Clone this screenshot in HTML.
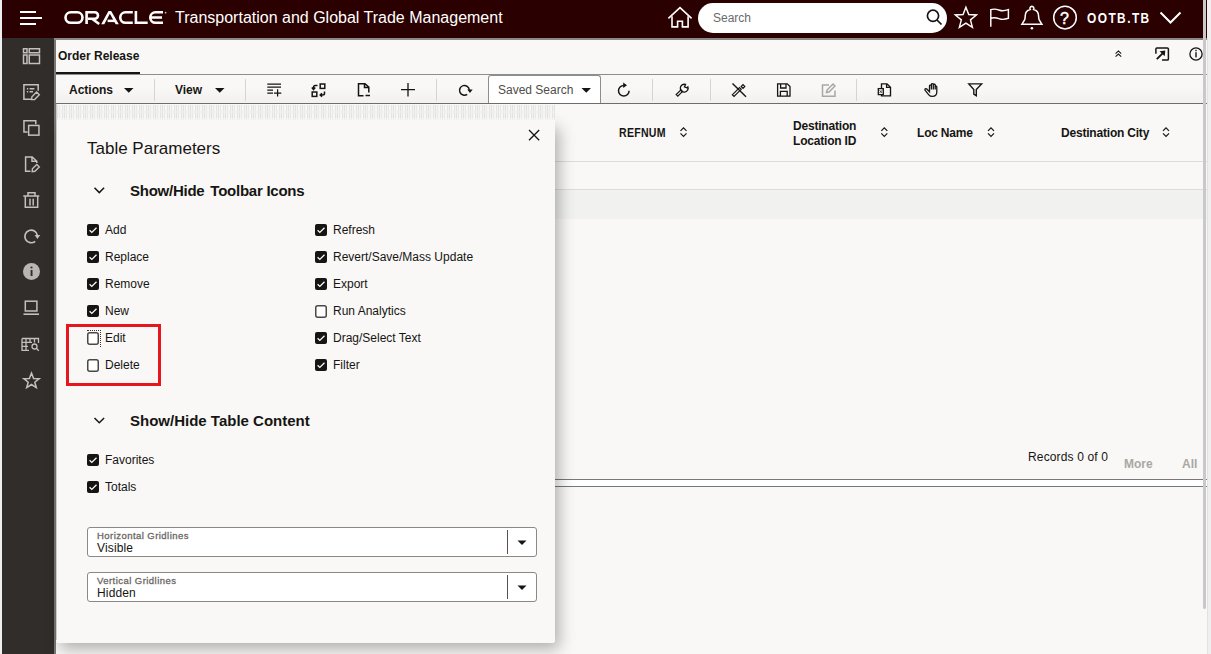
<!DOCTYPE html>
<html><head><meta charset="utf-8">
<style>
*{margin:0;padding:0;box-sizing:border-box}
html,body{width:1211px;height:654px;overflow:hidden;background:#efefef;font-family:"Liberation Sans",sans-serif;color:#161513}
.a{position:absolute}
#hdr{left:2px;top:0;width:1205px;height:38px;background:#2a0000}
#side{left:2px;top:38px;width:52px;height:616px;background:#312d2a}
#sideb{left:54px;top:38px;width:2px;height:616px;background:#7a7875}
#topb{left:54px;top:38px;width:1153px;height:2px;background:#8b8987}
#main{left:56px;top:40px;width:1151px;height:614px;background:#f9f8f6}
.t{position:absolute;white-space:nowrap;line-height:1}
svg{position:absolute;overflow:visible}
.sep{position:absolute;top:79px;width:1px;height:22px;background:#d6d4d1}
.cb{position:absolute;width:12px;height:12px;border-radius:2px;background:#161513}
.cbo{position:absolute;width:12px;height:12px;border-radius:2px;border:1.5px solid #4a4846;background:#fff}
.lbl{position:absolute;font-size:12px;white-space:nowrap;line-height:1;color:#161513}
</style></head><body>
<div class="a" id="hdr"></div>
<div class="a" id="side"></div>
<div class="a" id="sideb"></div>
<div class="a" id="topb"></div>
<div class="a" id="main"></div>


<!-- sidebar icons -->
<svg style="left:0;top:0" width="56" height="400"><g fill="none" stroke="#c4c0bb" stroke-width="1.5">
<rect x="23.5" y="48.75" width="3.5" height="4"/><rect x="29.25" y="48.75" width="10.25" height="4"/><rect x="23.5" y="55" width="3.5" height="8.5"/><rect x="29.25" y="55" width="10.25" height="8.5"/>
<path d="M31,99.3 H23.9 V84.7 H38.2 V90.8 M26.9,88.8 H28.2 M29.6,88.8 H34.4 M26.9,91.8 H28.2 M29.6,91.8 H33"/>
<path d="M31.6,99.6 L31.9,96.8 L36.6,92.1 L39.3,94.8 L34.6,99.5 Z" stroke-width="1.4"/>
<path d="M35.8,124.2 V120.75 H23.95 V132 H27.6"/><rect x="28.65" y="125.45" width="10.3" height="9.7"/>
<path d="M30.5,171.2 H25.6 V156.9 H32.2 L36.8,161.3 V163 M32,157 V161.2 H36.6"/>
<path d="M32.2,171.6 L32.4,168.8 L36.8,164.4 L39.3,166.9 L34.9,171.3 Z" stroke-width="1.4"/>
<path d="M23.3,196 H39.3 M28,195.8 V192.8 H35 V195.8 M25.3,196 V207.2 H37.7 V196 M30,198.8 V205.5 M33.2,198.8 V205.5"/>
<path d="M35.2,241.3 A6.3,6.3 0 1 1 37.4,235.5" stroke-width="1.7"/>
<path d="M23.5,314.2 H39" stroke-width="1.6"/><rect x="25.3" y="301.2" width="11.6" height="9.8" stroke-width="1.5"/>
<path d="M22,338.5 H38.5 V343 M22,338.5 V350.3 H29 M22,342.3 H32 M22,346.3 H28 M26,338.5 V350.3 M30,338.5 V342.5 M34.5,338.5 V342.5" stroke-width="1.3"/>
<circle cx="34.5" cy="346.5" r="2.5" stroke-width="1.3"/><path d="M36.3,348.3 L38.8,350.8" stroke-width="1.3"/>
<path d="M31.5,373 L33.6,378.5 L39.2,378.7 L34.8,382.2 L36.3,387.6 L31.5,384.5 L26.7,387.6 L28.2,382.2 L23.8,378.7 L29.4,378.5 Z" stroke-width="1.5"/>
</g>
<path d="M34.6,235 H40.2 L37.4,239 Z" fill="#c4c0bb"/>
<circle cx="31.5" cy="271.5" r="8.5" fill="#b9b5b0"/>
<rect x="30.6" y="270" width="1.9" height="6" fill="#312d2a"/><circle cx="31.5" cy="267.5" r="1.1" fill="#312d2a"/>
</svg>

<!-- header content -->
<svg style="left:0;top:0" width="60" height="38"><g stroke="#fff" stroke-width="2"><line x1="20" y1="12" x2="36" y2="12"/><line x1="20" y1="18" x2="42" y2="18"/><line x1="20" y1="24" x2="36" y2="24"/></g></svg>
<svg style="left:0;top:0" width="170" height="38"><g fill="none" stroke="#fff" stroke-width="2.6">
<rect x="65.5" y="12.3" width="17" height="10.5" rx="5.25"/>
<path d="M86.6,11 V24 M86.6,12.3 H94.8 A3.2,3.2 0 0 1 94.8,18.7 H88 M92,18.7 L99.2,24"/>
</g><g fill="#fff"><polygon points="101.2,24.2 108.5,11 111.2,11 118.8,24.2 115.7,24.2 109.85,13.8 104.3,24.2"/><rect x="107.6" y="19.6" width="7.3" height="2.5"/></g><g fill="none" stroke="#fff" stroke-width="2.6">
<path d="M132.8,12.3 H125.5 A5.25,5.25 0 0 0 125.5,22.8 H132.8"/>
<path d="M135.9,11 V22.8 H147.7"/>
<path d="M163,12.3 H155.5 A5.25,5.25 0 0 0 155.5,22.8 H163 M151.5,17.5 H162"/>
</g><circle cx="165.6" cy="12.7" r="0.9" fill="#bbb"/></svg>
<div class="t" style="left:175px;top:10px;font-size:16px;color:#fff">Transportation and Global Trade Management</div>


<!-- home -->
<svg style="left:0;top:0" width="1211" height="38"><g fill="none" stroke="#fff" stroke-width="1.6" stroke-linejoin="miter">
<path d="M668.4,18.4 L680,7.6 L691.6,18.4"/>
<path d="M672,16.2 V26.9 H677.6 V21.2 H682.4 V26.9 H688.1 V16.2"/>
</g>
<rect x="698" y="3" width="249" height="30" rx="15" fill="#fff"/>
<g fill="none" stroke="#161513" stroke-width="1.7"><circle cx="933" cy="15.8" r="5.6"/><path d="M937,20 L941.5,24.5"/></g>
<g fill="none" stroke="#fff" stroke-width="1.5" stroke-linejoin="miter">
<path d="M965.90,7.30 L968.72,14.52 L976.46,14.97 L970.47,19.88 L972.42,27.38 L965.90,23.20 L959.38,27.38 L961.33,19.88 L955.34,14.97 L963.08,14.52 Z" stroke-width="1.45"/>
<path d="M990.8,26.7 V9.6 C994,8.6 997,9.3 999.6,10.2 C1002.5,11.2 1005.5,10.6 1008.4,9.6 V18.3 C1005.5,19.3 1002.5,19.9 999.6,18.9 C997,18 994,17.3 990.8,18.3" stroke-width="1.45"/>
<path d="M1021.9,24.3 H1041.9 L1039.1,19.6 C1038.8,18.6 1038.6,17.5 1038.6,16 C1038.6,12.6 1036.2,10.2 1033.6,9.5 A2,2 0 1 0 1030.2,9.5 C1027.6,10.2 1025.2,12.6 1025.2,16 C1025.2,17.5 1025.0,18.6 1024.7,19.6 Z"/>
<circle cx="1065" cy="17.6" r="11.3"/>
<path d="M1160.5,12.5 L1170.5,22.5 L1180.5,12.5" stroke-width="2"/>
</g>
<circle cx="1031.9" cy="28.2" r="1.3" fill="#fff"/>
</svg>
<div class="t" style="left:713px;top:12px;font-size:12px;color:#6a6a6a">Search</div>
<div class="t" style="left:1060px;top:11px;font-size:16px;color:#fff;-webkit-text-stroke:0.5px #fff">?</div>
<div class="t" style="left:1087px;top:11px;font-size:14px;color:#fff;font-weight:bold;letter-spacing:1.7px;transform:scaleX(0.85);transform-origin:0 0">OOTB.TB</div>

<!-- order release row -->
<div class="t" style="left:58px;top:50px;font-size:12px;font-weight:bold">Order Release</div>
<div class="a" style="left:56px;top:72px;width:84px;height:2px;background:#161513"></div>
<div class="a" style="left:56px;top:74px;width:1151px;height:1px;background:#8f8d8b"></div>
<div class="a" style="left:56px;top:103px;width:1151px;height:1px;background:#6f6d6b"></div>
<svg style="left:0;top:0" width="1211" height="110">
<g fill="none" stroke="#161513" stroke-width="1.1"><path d="M1115.6,53.6 L1118.4,50.9 L1121.2,53.6 M1115.6,56.7 L1118.4,54 L1121.2,56.7"/></g>
<g fill="none" stroke="#161513"><path d="M1155.9,53.8 V49 Q1155.9,47.9 1157,47.9 H1167.3 Q1168.4,47.9 1168.4,49 V59 Q1168.4,60.1 1167.3,60.1 H1162" stroke-width="1.5"/><path d="M1156.8,59.2 L1162.6,53.4" stroke-width="1.9"/></g><path d="M1159.6,51.2 L1165.3,50.6 L1164.7,56.3 Z" fill="#161513"/>
<g fill="none" stroke="#161513" stroke-width="1.3"><circle cx="1196" cy="54" r="6.1"/></g>
<rect x="1195.3" y="52.2" width="1.4" height="5.2" fill="#161513"/><rect x="1195.3" y="49.8" width="1.4" height="1.4" fill="#161513"/>
</svg>

<!-- toolbar -->
<div class="a" style="left:56px;top:75px;width:1151px;height:28px;background:linear-gradient(#f9f8f6 0,#f9f8f6 40%,#f2f1ef 100%)"></div>
<div class="t" style="left:69px;top:84px;font-size:12px;font-weight:bold">Actions</div>
<div class="t" style="left:175px;top:84px;font-size:12px;font-weight:bold">View</div>
<div class="sep" style="left:154px"></div>
<div class="sep" style="left:245px"></div>
<div class="sep" style="left:436px"></div>
<div class="sep" style="left:652px"></div>
<div class="sep" style="left:710px"></div>
<div class="sep" style="left:856px"></div>
<div class="a" style="left:488px;top:75px;width:113px;height:28px;background:#fff;border:1px solid #8f8d8b;border-bottom:none;border-radius:3px 3px 0 0"></div>
<div class="t" style="left:498px;top:84px;font-size:12px;color:#4f4c49">Saved Search</div>
<svg style="left:0;top:0" width="1211" height="110">
<g fill="#161513"><path d="M124,88 H133.5 L128.75,92.8 Z"/><path d="M215,88 H224.5 L219.75,92.8 Z"/><path d="M581.5,88 H591 L586.25,92.8 Z"/></g>
<g fill="none" stroke="#161513" stroke-width="1.5">
<path d="M267.3,84 H281 M267.3,87.2 H281 M267.3,90 H273 M267.3,93 H273 M274,93 H281.3 M277.6,89.2 V96.5" stroke-width="1.25"/>
<rect x="320.2" y="84" width="4.6" height="4.4"/><rect x="312.2" y="92" width="4.6" height="4.4"/>
<path d="M317.5,85.5 H315.3 Q313.5,85.5 313.5,87.5 V89 M311.8,87.5 L313.5,89.5 L315.2,87.5"/>
<path d="M324.5,91.5 V93.5 Q324.5,95 322.5,95 H320.5 M322,93.3 L320.2,95 L322,96.7"/>
<path d="M368.8,92.5 V87.2 L365,83.8 H358.5 V95.7 H363.5 M364.5,84 V87.5 H368.8 M365.5,95.6 H370"/>
<path d="M401,89.7 H415 M408,83 V96.4" stroke-width="1.3"/>
<path d="M467.2,94.4 A4.9,4.9 0 1 1 469.3,89.8"/>
<path d="M623.8,85.4 A5.3,5.3 0 1 0 629.1,90.7"/>
<path d="M682.6,91.4 L677.8,96.2 L676.2,94.6 L681,89.8 Z" stroke-width="1.2"/><path d="M687.9,86.9 A3.9,3.9 0 1 1 685.5,84.5 L684.5,86.9 L686.8,87.8 Z" stroke-width="1.35"/>
<path d="M732.5,83.5 L746,96.8" stroke-width="1.4"/><path d="M732.3,94.8 L739.5,87.6 L741.2,89.3 L734,96.5 Z M741.2,86.5 L743,84.7 L744.8,86.5 L743,88.3 Z" stroke-width="1.2"/>
<path d="M777.6,83.9 H787.3 L790,86.6 V96.2 H777.6 Z M780.6,84 V88 H786 V84 M780.4,96.2 V91.3 H787.2 V96.2" stroke-width="1.3"/>
<path d="M890.5,95.8 H881.5 V83.8 H887 L890.5,87.2 Z M886.6,83.8 V87.4 H890.5" stroke-width="1.35"/>
<path d="M929.5,91.8 L926.8,89 C925.8,88 924.3,89.2 925.2,90.3 L928.8,94.8 C929.8,96 930.8,96.4 932.3,96.4 C935,96.4 936.8,94.6 936.8,92 V87 C936.8,86 935.2,86 935.2,87 V89.5 V85 C935.2,84 933.3,84 933.3,85 V89.5 V84.3 C933.3,83.3 931.4,83.3 931.4,84.3 V89.5 V85.8 C931.4,84.8 929.5,84.8 929.5,85.8 Z" stroke-width="1.3"/>
<path d="M968.8,83.9 H981.6 L976.3,89.6 V95.6 L973.8,94 V89.6 Z" stroke-width="1.4"/>
</g>
<g fill="#161513"><path d="M467.3,89.6 H472.6 L470,93 Z"/><path d="M623.2,82.6 L627,85.3 L623.2,88 Z"/></g>
<rect x="878.3" y="88.6" width="5" height="6" fill="#f9f8f6" stroke="#161513" stroke-width="1.3"/><path d="M879.6,90.3 L882,92.9 M882,90.3 L879.6,92.9" stroke="#161513" stroke-width="0.8"/>
<g fill="none" stroke="#a9a7a4" stroke-width="1.5"><path d="M829,85 H822.5 V96.2 H835 V90.5 M826.5,92.5 L827,90 L833,84 L835,86 L829,92 Z"/></g>
</svg>

<!-- table -->
<div class="a" style="left:56px;top:161px;width:1152px;height:1px;background:#dedcda"></div>
<div class="a" style="left:56px;top:189px;width:1152px;height:1px;background:#dedcda"></div>
<div class="a" style="left:56px;top:190px;width:1151px;height:29px;background:#f1f1f0"></div>
<div class="t" style="left:619px;top:127px;font-size:12px;font-weight:bold;letter-spacing:0.3px;transform:scaleX(0.88);transform-origin:0 0">REFNUM</div>
<div class="t" style="left:793px;top:118.5px;font-size:12px;font-weight:bold;line-height:15px;letter-spacing:-0.2px">Destination<br>Location ID</div>
<div class="t" style="left:917px;top:127px;font-size:12px;font-weight:bold;letter-spacing:-0.2px">Loc Name</div>
<div class="t" style="left:1061px;top:127px;font-size:12px;font-weight:bold;letter-spacing:-0.2px">Destination City</div>
<svg style="left:0;top:0" width="1211" height="200"><g fill="none" stroke="#161513" stroke-width="1.2">
<path d="M680.5,130.8 L683.5,127.8 L686.5,130.8 M680.5,133.4 L683.5,136.4 L686.5,133.4"/>
<path d="M881.3,130.8 L884.3,127.8 L887.3,130.8 M881.3,133.4 L884.3,136.4 L887.3,133.4"/>
<path d="M988,130.8 L991,127.8 L994,130.8 M988,133.4 L991,136.4 L994,133.4"/>
<path d="M1163,130.8 L1166,127.8 L1169,130.8 M1163,133.4 L1166,136.4 L1169,133.4"/>
</g></svg>
<div class="t" style="left:1028px;top:451px;font-size:12px;letter-spacing:0.15px">Records 0 of 0</div>
<div class="t" style="left:1124px;top:458px;font-size:12px;font-weight:bold;color:#a9a7a5">More</div>
<div class="t" style="left:1182px;top:458px;font-size:12px;font-weight:bold;color:#a9a7a5">All</div>
<div class="a" style="left:56px;top:479px;width:1151px;height:1px;background:#7a7876"></div>
<div class="a" style="left:56px;top:480px;width:1151px;height:6px;background:#ffffff"></div>
<div class="a" style="left:56px;top:486px;width:1151px;height:1px;background:#7a7876"></div>
<!-- scrollbar -->
<div class="a" style="left:1203px;top:0;width:3px;height:609px;background:#c9c9c9;border-radius:0 0 2px 2px"></div>
<div class="a" style="left:1207px;top:38px;width:1px;height:616px;background:#e2e2e2"></div>

<!-- panel -->
<div class="a" style="left:56px;top:122px;width:499px;height:521px;background:#f9f8f6;border-radius:0 0 3px 3px;box-shadow:4px 6px 16px rgba(0,0,0,0.30)"></div><div class="a" style="left:56px;top:104px;width:499px;height:539px;background:#f9f8f6;border-radius:0 0 3px 3px"></div>
<div class="a" style="left:56px;top:104px;width:1px;height:536px;background:#cfcdca"></div>
<div class="a" style="left:57px;top:105px;width:498px;height:15px;background:repeating-linear-gradient(90deg,#e2e2e2 0 1px,#f4f4f3 1px 2px,#e8e8e8 2px 3px,#f6f6f5 3px 5px,#e5e5e5 5px 6px,#f2f2f1 6px 7px)"></div><div class="a" style="left:57px;top:111px;width:498px;height:2px;background:rgba(240,240,240,0.5)"></div><div class="a" style="left:57px;top:118px;width:498px;height:2px;background:rgba(246,246,245,0.6)"></div>
<div class="t" style="left:87px;top:140px;font-size:17px">Table Parameters</div>
<svg style="left:0;top:0" width="600" height="654"><g fill="none" stroke="#161513" stroke-width="1.5">
<path d="M529,130 L539.2,140.2 M539.2,130 L529,140.2" stroke-width="1.3"/>
<path d="M94.5,187.8 L99.3,192.6 L104.1,187.8"/>
<path d="M94.5,418 L99.3,422.8 L104.1,418"/>
</g></svg>
<div class="t" style="left:130px;top:183px;font-size:15px;font-weight:bold;letter-spacing:-0.25px">Show/Hide <span style="margin-left:2px">Toolbar</span> Icons</div>
<div class="t" style="left:130px;top:413px;font-size:15px;font-weight:bold">Show/Hide Table Content</div>
<svg style="left:87px;top:224px" width="12" height="12"><rect x="0" y="0" width="12" height="12" rx="2" fill="#161513"/><path d="M2.6,6.3 L4.8,8.4 L9.5,3.7" fill="none" stroke="#fff" stroke-width="1.25"/></svg>
<div class="lbl" style="left:105px;top:224px">Add</div>
<svg style="left:315px;top:224px" width="12" height="12"><rect x="0" y="0" width="12" height="12" rx="2" fill="#161513"/><path d="M2.6,6.3 L4.8,8.4 L9.5,3.7" fill="none" stroke="#fff" stroke-width="1.25"/></svg>
<div class="lbl" style="left:333px;top:224px">Refresh</div>
<svg style="left:87px;top:251px" width="12" height="12"><rect x="0" y="0" width="12" height="12" rx="2" fill="#161513"/><path d="M2.6,6.3 L4.8,8.4 L9.5,3.7" fill="none" stroke="#fff" stroke-width="1.25"/></svg>
<div class="lbl" style="left:105px;top:251px">Replace</div>
<svg style="left:315px;top:251px" width="12" height="12"><rect x="0" y="0" width="12" height="12" rx="2" fill="#161513"/><path d="M2.6,6.3 L4.8,8.4 L9.5,3.7" fill="none" stroke="#fff" stroke-width="1.25"/></svg>
<div class="lbl" style="left:333px;top:251px">Revert/Save/Mass Update</div>
<svg style="left:87px;top:278px" width="12" height="12"><rect x="0" y="0" width="12" height="12" rx="2" fill="#161513"/><path d="M2.6,6.3 L4.8,8.4 L9.5,3.7" fill="none" stroke="#fff" stroke-width="1.25"/></svg>
<div class="lbl" style="left:105px;top:278px">Remove</div>
<svg style="left:315px;top:278px" width="12" height="12"><rect x="0" y="0" width="12" height="12" rx="2" fill="#161513"/><path d="M2.6,6.3 L4.8,8.4 L9.5,3.7" fill="none" stroke="#fff" stroke-width="1.25"/></svg>
<div class="lbl" style="left:333px;top:278px">Export</div>
<svg style="left:87px;top:305px" width="12" height="12"><rect x="0" y="0" width="12" height="12" rx="2" fill="#161513"/><path d="M2.6,6.3 L4.8,8.4 L9.5,3.7" fill="none" stroke="#fff" stroke-width="1.25"/></svg>
<div class="lbl" style="left:105px;top:305px">New</div>
<svg style="left:315px;top:305px" width="12" height="13"><rect x="0.75" y="0.75" width="10.5" height="11.5" rx="2" fill="#fff" stroke="#4a4846" stroke-width="1.5"/></svg>
<div class="lbl" style="left:333px;top:305px">Run Analytics</div>
<svg style="left:87px;top:332px" width="12" height="13"><rect x="0.75" y="0.75" width="10.5" height="11.5" rx="2" fill="#fff" stroke="#4a4846" stroke-width="1.5"/></svg>
<div class="lbl" style="left:105px;top:332px">Edit</div>
<svg style="left:315px;top:332px" width="12" height="12"><rect x="0" y="0" width="12" height="12" rx="2" fill="#161513"/><path d="M2.6,6.3 L4.8,8.4 L9.5,3.7" fill="none" stroke="#fff" stroke-width="1.25"/></svg>
<div class="lbl" style="left:333px;top:332px">Drag/Select Text</div>
<svg style="left:87px;top:359px" width="12" height="13"><rect x="0.75" y="0.75" width="10.5" height="11.5" rx="2" fill="#fff" stroke="#4a4846" stroke-width="1.5"/></svg>
<div class="lbl" style="left:105px;top:359px">Delete</div>
<svg style="left:315px;top:359px" width="12" height="12"><rect x="0" y="0" width="12" height="12" rx="2" fill="#161513"/><path d="M2.6,6.3 L4.8,8.4 L9.5,3.7" fill="none" stroke="#fff" stroke-width="1.25"/></svg>
<div class="lbl" style="left:333px;top:359px">Filter</div>
<svg style="left:87px;top:454px" width="12" height="12"><rect x="0" y="0" width="12" height="12" rx="2" fill="#161513"/><path d="M2.6,6.3 L4.8,8.4 L9.5,3.7" fill="none" stroke="#fff" stroke-width="1.25"/></svg>
<div class="lbl" style="left:105px;top:454px">Favorites</div>
<svg style="left:87px;top:481px" width="12" height="12"><rect x="0" y="0" width="12" height="12" rx="2" fill="#161513"/><path d="M2.6,6.3 L4.8,8.4 L9.5,3.7" fill="none" stroke="#fff" stroke-width="1.25"/></svg>
<div class="lbl" style="left:105px;top:481px">Totals</div>

<div class="a" style="left:87px;top:330px;width:14px;height:17px;border-top:1px dotted #333;border-right:1px dotted #333"></div>
<div class="a" style="left:66px;top:324px;width:95px;height:62px;border:3px solid #e5161e"></div>
<div class="a" style="left:87px;top:527px;width:450px;height:30px;background:#fff;border:1px solid #8b8986;border-radius:3px"></div>
<div class="a" style="left:507px;top:530px;width:1px;height:24px;background:#55524f"></div>
<svg style="left:517px;top:540px" width="10" height="6"><path d="M0.5,0.5 H9.5 L5,5 Z" fill="#161513"/></svg>
<div class="t" style="left:97px;top:531px;font-size:9.5px;letter-spacing:0.45px;color:#6b6763;-webkit-text-stroke:0.3px #6b6763">Horizontal Gridlines</div>
<div class="t" style="left:97px;top:542px;font-size:12px;letter-spacing:0.15px">Visible</div>
<div class="a" style="left:87px;top:572px;width:450px;height:30px;background:#fff;border:1px solid #8b8986;border-radius:3px"></div>
<div class="a" style="left:507px;top:575px;width:1px;height:24px;background:#55524f"></div>
<svg style="left:517px;top:585px" width="10" height="6"><path d="M0.5,0.5 H9.5 L5,5 Z" fill="#161513"/></svg>
<div class="t" style="left:97px;top:576px;font-size:9.5px;letter-spacing:0.45px;color:#6b6763;-webkit-text-stroke:0.3px #6b6763">Vertical Gridlines</div>
<div class="t" style="left:97px;top:587px;font-size:12px;letter-spacing:0.15px">Hidden</div>
</body></html>
